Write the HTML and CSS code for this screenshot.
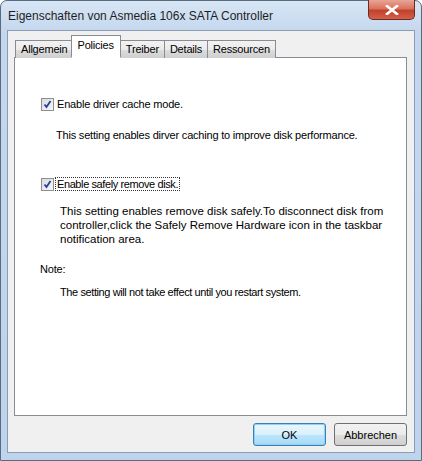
FILE: index.html
```html
<!DOCTYPE html>
<html lang="de">
<head>
  <meta charset="UTF-8">
  <title>Eigenschaften von Asmedia 106x SATA Controller</title>
  <link rel="stylesheet" href="styles.css">
</head>
<body>

<div class="ventana">
  <div class="titulo">
    <span class="titulo-texto">Eigenschaften von Asmedia 106x SATA Controller</span>
    <button class="cerrar" title="Schließen">
      <svg width="14" height="10" viewBox="0 0 14 10">
        <path d="M2 1 L12 9 M12 1 L2 9" stroke="#fff" stroke-width="2.6" stroke-linecap="square"/>
      </svg>
    </button>
  </div>

  <div class="cliente">
    <div class="pestanas">
      <span class="pestana">Allgemein</span>
      <span class="pestana activa">Policies</span>
      <span class="pestana">Treiber</span>
      <span class="pestana">Details</span>
      <span class="pestana">Ressourcen</span>
    </div>

    <div class="pagina">
      <label class="opcion primera">
        <span class="caja"><svg width="9" height="9" viewBox="0 0 9 9"><path d="M1.5 4.5 L3.5 7 L7.5 1" fill="none" stroke="#2a3f8f" stroke-width="1.8"/></svg></span>
        <span>Enable driver cache mode.</span>
      </label>
      <p class="desc uno">This setting enables dirver caching to improve disk performance.</p>

      <label class="opcion segunda">
        <span class="caja"><svg width="9" height="9" viewBox="0 0 9 9"><path d="M1.5 4.5 L3.5 7 L7.5 1" fill="none" stroke="#2a3f8f" stroke-width="1.8"/></svg></span>
        <span class="foco">Enable safely remove disk.</span>
      </label>
      <p class="desc dos">This setting enables remove disk safely.To disconnect disk from controller,click the Safely Remove Hardware icon in the taskbar notification area.</p>

      <p class="nota">Note:</p>
      <p class="desc tres">The setting will not take effect until you restart system.</p>
    </div>

    <div class="botones">
      <button class="boton predeterminado">OK</button>
      <button class="boton">Abbrechen</button>
    </div>
  </div>
</div>

</body>
</html>
```

FILE: styles.css
```css
body {
  margin: 0;
  font-family: 'Liberation Sans', Arial, sans-serif;
  font-size: 11px;
  letter-spacing: -0.2px;
  color: #000;
  background-color: #fff;
}

.ventana {
  width: 420px;
  height: 459px;
  border: 1px solid #5a6b80;
  border-radius: 7px 7px 0 0;
  background: linear-gradient(to bottom, #d8e6f5 0px, #c4d7ee 30px, #bed3ec 100%);
  display: flex;
  flex-direction: column;
}

.titulo {
  height: 29px;
  display: flex;
  align-items: flex-start;
  justify-content: space-between;
  padding-left: 7px;
}

.titulo-texto {
  font-size: 12px;
  letter-spacing: 0;
  margin-top: 8px;
  color: #1e1e1e;
}

.cerrar {
  width: 47px;
  height: 20px;
  margin-right: 6px;
  margin-top: -1px;
  border: 1px solid #6b2a22;
  border-top: none;
  border-radius: 0 0 5px 5px;
  background: linear-gradient(to bottom, #e9a595 0%, #d9735f 45%, #c2412c 55%, #d2614a 100%);
  padding: 0;
  display: flex;
  align-items: center;
  justify-content: center;
}

.cliente {
  flex: 1;
  margin: 0 6px 7px 6px;
  background-color: #f0f0f0;
  border: 1px solid #8c9db3;
  padding: 7px 7px 0 6px;
  display: flex;
  flex-direction: column;
}

.pestanas {
  display: flex;
  align-items: flex-end;
  height: 20px;
  padding-left: 1px;
  margin-bottom: -1px;
  position: relative;
  z-index: 1;
}

.pestana {
  height: 17px;
  line-height: 17px;
  padding: 0 5px;
  border: 1px solid #898c95;
  border-bottom: none;
  margin-right: -1px;
  background: linear-gradient(to bottom, #f2f2f2 0%, #ebebeb 50%, #dddddd 51%, #cfcfcf 100%);
  color: #000;
}

.pestana.activa {
  height: 21px;
  line-height: 18px;
  padding: 0 6px;
  margin: 0 -1px 0 -2px;
  background: #fff;
  border-bottom: 1px solid #fff;
  position: relative;
  z-index: 2;
}

.pagina {
  height: 357px;
  background-color: #fff;
  border: 1px solid #898c95;
  padding: 0 0 0 26px;
}

.opcion {
  display: flex;
  align-items: center;
  height: 14px;
}

.opcion.primera {
  margin-top: 39px;
}

.opcion.segunda {
  margin-top: 35px;
  letter-spacing: -0.4px;
}

.caja {
  width: 11px;
  height: 11px;
  border: 1px solid #8e8f8f;
  background: linear-gradient(135deg, #d9dde3 0%, #f4f6f8 100%);
  display: flex;
  align-items: center;
  justify-content: center;
  margin-right: 3px;
}

.foco {
  outline: 1px dotted #333;
  outline-offset: 0;
  padding: 0 1px;
  margin-left: -1px;
}

.desc {
  margin: 0;
  line-height: 14px;
}

.desc.uno {
  margin-top: 17px;
  padding-left: 15px;
}

.desc.dos {
  margin-top: 13px;
  padding-left: 19px;
  width: 330px;
  font-size: 11.5px;
  letter-spacing: 0;
}

.nota {
  margin: 16px 0 0 -1px;
  line-height: 14px;
}

.desc.tres {
  margin-top: 9px;
  padding-left: 19px;
  letter-spacing: -0.4px;
}

.botones {
  display: flex;
  justify-content: flex-end;
  gap: 8px;
  padding: 7px 0 0 0;
}

.boton {
  width: 73px;
  height: 23px;
  font-family: 'Liberation Sans', Arial, sans-serif;
  font-size: 11px;
  color: #000;
  border: 1px solid #707070;
  border-radius: 3px;
  background: linear-gradient(to bottom, #f2f2f2 0%, #ebebeb 50%, #dddddd 51%, #cfcfcf 100%);
  padding: 0;
}

.boton.predeterminado {
  border-color: #3c7fb1;
  box-shadow: inset 0 0 0 1px #8ed2f7;
  background: linear-gradient(to bottom, #eaf6fd 0%, #d9f0fc 50%, #bee6fd 51%, #a7d9f5 100%);
}
```
